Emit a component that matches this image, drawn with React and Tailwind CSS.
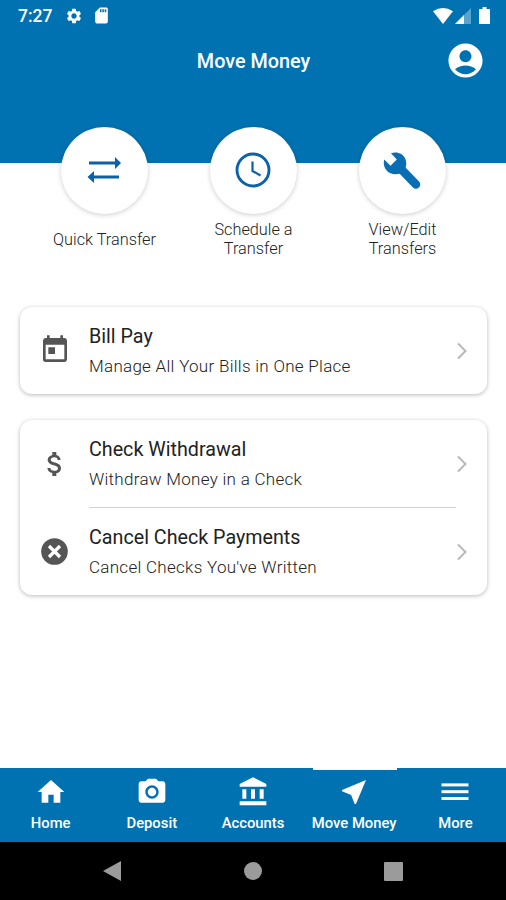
import React from 'react';
import {
  MdSettings,
  MdSdCard,
  MdAccountCircle,
  MdToday,
  MdAttachMoney,
  MdHome,
  MdCameraAlt,
  MdAccountBalance,
  MdNearMe,
} from 'react-icons/md';

function TransferIcon() {
  return (
    <svg width="34" height="26" viewBox="0 0 34 26" fill="currentColor" className="-mt-px mr-px">
      <path d="M2 4.500h26V0l6 6-6 6V7.500H2zM32 18.500H7V14l-6.500 6L7 26v-4.500h25z" />
    </svg>
  );
}

function ClockIcon() {
  return (
    <svg width="36" height="36" viewBox="0 0 36 36" fill="none" stroke="currentColor" strokeWidth="2.900" className="-mt-px mr-px">
      <circle cx="18" cy="18" r="16" />
      <path d="M17.500 9.500v9.500l8 4.500" strokeWidth="2.200" />
    </svg>
  );
}

function WrenchIcon() {
  return (
    <svg width="38" height="38" viewBox="0 0 38 38" className="text-[#0a6eb4] mr-px">
      <path d="M18 17L33 32.500" stroke="currentColor" strokeWidth="8.500" strokeLinecap="round" />
      <path
        d="M8 1.200C14-.800 20 1.500 22.200 6.500c1.800 4 1.300 8.500-1.200 12-3.500 4.200-9.500 4.800-14 2.500C2 18.500-.2 13 1.200 7.500l6.300 6.300 6.300-6.200z"
        fill="currentColor"
      />
    </svg>
  );
}

function CancelIcon() {
  return (
    <svg width="27" height="27" viewBox="0 0 27 27" className="-mt-[2px] ml-[2px]">
      <circle cx="13.500" cy="13.500" r="13.300" fill="currentColor" />
      <path d="M8 8l11 11M19 8L8 19" stroke="#fff" strokeWidth="3.200" />
    </svg>
  );
}

function MenuIcon() {
  return (
    <svg width="28" height="32" viewBox="0 0 28 32" fill="currentColor">
      <rect x="0.500" y="7.400" width="27" height="3" />
      <rect x="0.500" y="14.200" width="27" height="3" />
      <rect x="0.500" y="21" width="27" height="3" />
    </svg>
  );
}

function Chevron() {
  return (
    <svg width="12" height="18" viewBox="0 0 12 18" fill="none" stroke="#b8b8b8" strokeWidth="2">
      <path d="M2 1.500L9.500 9L2 16.500" />
    </svg>
  );
}

function SignalIcon() {
  return (
    <svg width="16" height="16" viewBox="0 0 16 16">
      <path d="M16 0v16H0z" fill="#fff" fillOpacity="0.350" />
      <path d="M9 7v9H0z" fill="#fff" />
    </svg>
  );
}

const actions = [
  { label: 'Quick Transfer', icon: <TransferIcon /> },
  { label: 'Schedule a Transfer', icon: <ClockIcon /> },
  { label: 'View/Edit Transfers', icon: <WrenchIcon /> },
];

const tabs = [
  { label: 'Home', icon: <MdHome size={32} /> },
  { label: 'Deposit', icon: <MdCameraAlt size={32} /> },
  { label: 'Accounts', icon: <MdAccountBalance size={32} /> },
  { label: 'Move Money', icon: <MdNearMe size={32} />, active: true },
  { label: 'More', icon: <MenuIcon /> },
];

function StatusBar() {
  return (
    <div className="flex h-8 items-center pl-[18px] pr-[16px]">
      <span className="w-[47px] text-[17.5px] font-medium leading-5">7:27</span>
      <MdSettings size={18} />
      <MdSdCard size={19} className="-mt-px ml-[9px]" />
      <div className="-mt-[1px] ml-auto flex items-center">
        <svg width="20" height="16" viewBox="0 0 20 16" fill="#fff">
          <path d="M0 3.200Q10-3.200 20 3.200L10 16z" />
        </svg>
        <span className="ml-[2px]"><SignalIcon /></span>
        <svg width="11" height="17" viewBox="0 0 11 17" fill="#fff" className="ml-[8px]">
          <path d="M3.500 0h4v2H11v15H0V2h3.500z" />
        </svg>
      </div>
    </div>
  );
}

function Row({ icon, title, text }) {
  return (
    <div className="flex h-[87px] items-center pl-[19px] pr-[19px] pt-[1px]">
      <span className="w-[50px] text-[#555]">{icon}</span>
      <div className="flex-1 whitespace-nowrap">
        <h2 className="text-[19.7px] leading-[28px] text-[#222]">{title}</h2>
        <p className="mb-px mt-[2px] text-[17px] font-light leading-[26px] tracking-[0.28px] text-[#222]">{text}</p>
      </div>
      <Chevron />
    </div>
  );
}

function App() {
  return (
    <div className="flex h-[900px] w-[506px] flex-col overflow-hidden bg-white font-['Roboto',sans-serif]">
      <header className="h-[163px] shrink-0 bg-[#0072b1] text-white">
        <StatusBar />
        <div className="grid h-[58px] grid-cols-[1fr_auto_1fr] items-center">
          <span />
          <h1 className="pl-px pt-px text-[19.8px] font-medium">Move Money</h1>
          <MdAccountCircle size={41} className="-mt-px mr-[20px] justify-self-end" />
        </div>
      </header>

      <div className="-mt-9 grid shrink-0 grid-cols-3 pl-[30px] pr-[29px]">
        {actions.map((action) => (
          <div key={action.label} className="flex flex-col items-center">
            <div className="flex h-[87px] w-[87px] items-center justify-center rounded-full bg-white text-[#0b62a8] shadow-[0_1px_5px_rgba(0,0,0,0.2)]">
              {action.icon}
            </div>
            <div className="mt-[5px] flex h-[40px] w-[112px] items-center justify-center text-center text-[16.3px] font-light leading-[19px] text-[#222]">
              {action.label}
            </div>
          </div>
        ))}
      </div>

      <main className="flex flex-1 flex-col gap-[26px] px-[20px] pt-[48px]">
        <section className="mr-[-1px] rounded-[12px] bg-white shadow-[0_1px_4px_rgba(0,0,0,0.28)]">
          <Row icon={<MdToday size={32} className="-mt-[2px]" />} title="Bill Pay" text="Manage All Your Bills in One Place" />
        </section>
        <section className="mr-[-1px] rounded-[12px] bg-white shadow-[0_1px_4px_rgba(0,0,0,0.28)]">
          <Row icon={<MdAttachMoney size={32} />} title="Check Withdrawal" text="Withdraw Money in a Check" />
          <div className="ml-[69px] mr-[31px] h-[1px] bg-[#d4d4d4]" />
          <Row icon={<CancelIcon />} title="Cancel Check Payments" text="Cancel Checks You've Written" />
        </section>
      </main>

      <nav className="grid h-[74px] shrink-0 grid-cols-5 bg-[#0072b1] text-white">
        {tabs.map((tab) => (
          <div key={tab.label} className="relative flex flex-col items-center pt-[8px]">
            {tab.active && <span className="absolute left-[9px] top-[-1px] h-[3px] w-[84px] bg-white" />}
            {tab.icon}
            <span className="mt-[5px] whitespace-nowrap text-[14.8px] font-medium leading-[20px]">{tab.label}</span>
          </div>
        ))}
      </nav>

      <footer className="flex h-[58px] shrink-0 items-center justify-between bg-black px-[103px]">
        <svg width="18" height="20" viewBox="0 0 18 20" fill="#9b9b9b">
          <path d="M18 0v20L0 10z" />
        </svg>
        <span className="h-[18px] w-[18px] rounded-full bg-[#9b9b9b]" />
        <span className="h-[19px] w-[19px] rounded-[1px] bg-[#9b9b9b]" />
      </footer>
    </div>
  );
}

export default App;
